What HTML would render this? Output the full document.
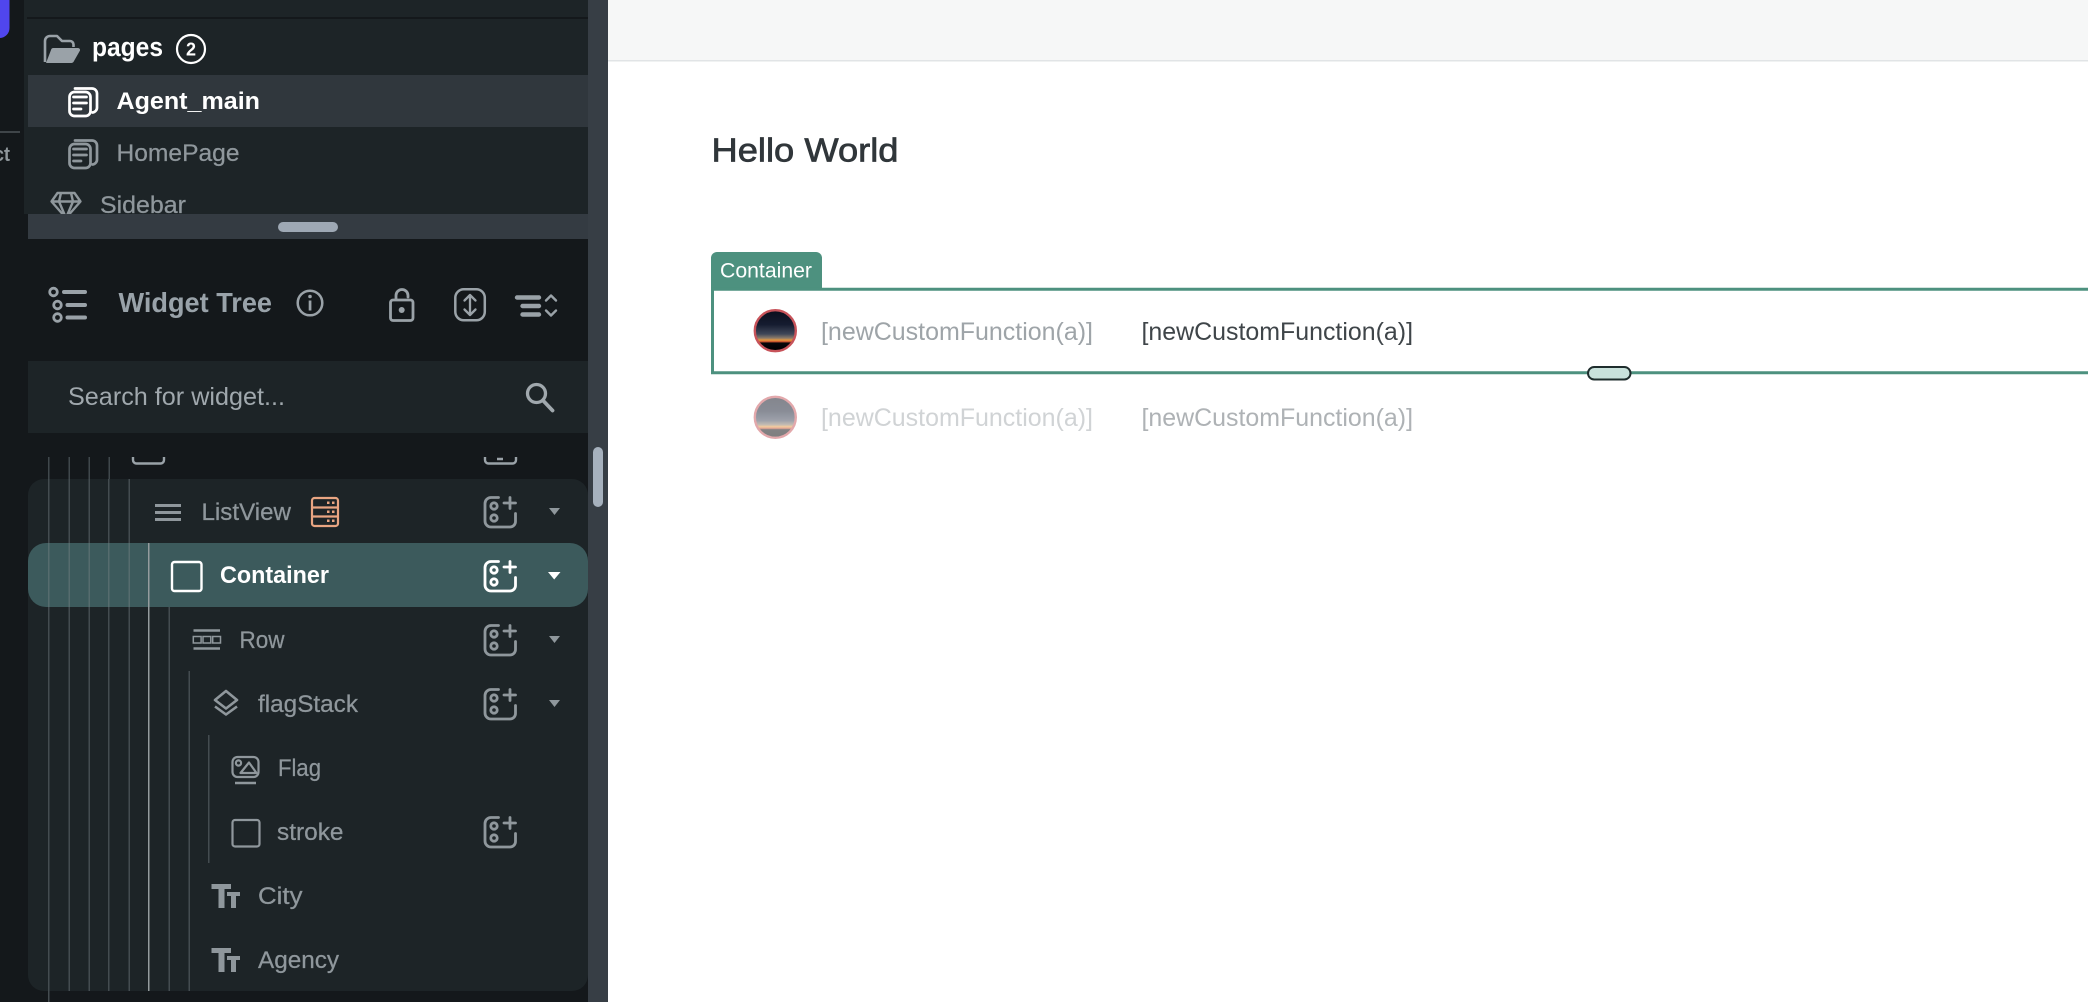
<!DOCTYPE html>
<html lang="en"><head><meta charset="utf-8"><title>Widget Tree</title>
<style>
html,body{margin:0;padding:0;background:#fff;width:2088px;height:1002px;overflow:hidden}
svg{display:block;filter:blur(.35px)}
text{font-family:"Liberation Sans",sans-serif;white-space:pre}
.d{fill:#8f979c;font-size:24.500px;stroke:#8f979c;stroke-width:.25px}
.b{fill:#fff;font-size:24.500px;font-weight:bold}
.f{font-size:25px}
</style></head><body>
<svg xmlns="http://www.w3.org/2000/svg" width="2088" height="1002" viewBox="0 0 2088 1002">
<defs>
<linearGradient id="sky" x1="0" y1="0" x2="0" y2="1">
<stop offset="0" stop-color="#0a0e1c"/><stop offset=".35" stop-color="#151c30"/><stop offset=".58" stop-color="#3f4658"/><stop offset=".68" stop-color="#8a7a6a"/><stop offset=".73" stop-color="#e8983e"/><stop offset=".77" stop-color="#c8502c"/><stop offset=".8" stop-color="#08060a"/><stop offset="1" stop-color="#000"/>
</linearGradient>
<g id="add" fill="none" stroke-width="2.800" stroke-linecap="round">
<path d="M14.500 1.500H7a6 6 0 0 0-6 6V25a6 6 0 0 0 6 6H26a5.500 5.500 0 0 0 5.500-5.500V17.500"/>
<circle cx="10" cy="10" r="3.200"/><circle cx="10" cy="22" r="3.200"/>
<path d="M26 1.500V12.500M20 7H31.500"/>
</g>
<g id="page" fill="none" stroke-width="2.700" stroke-linecap="round">
<rect x="69.500" y="92" width="21" height="24" rx="5"/>
<path d="M75 88.500H92A5 5 0 0 1 97 93.500V107A5 5 0 0 1 92.500 112.500"/>
<path d="M73.500 97H86.500M73.500 103H86.500M73.500 109H81"/>
</g>
</defs>

<!-- base -->
<rect width="2088" height="1002" fill="#fff"/>
<!-- left rail -->
<rect x="0" y="0" width="24" height="1002" fill="#14181b"/>
<path d="M0 0H9.500V28A10 10 0 0 1 0 38Z" fill="#5046ee"/>
<rect x="0" y="131" width="20" height="2" fill="#3f4549"/>
<text x="-6" y="161" font-size="20" font-weight="bold" fill="#8f979c" textLength="16" lengthAdjust="spacingAndGlyphs">ct</text>

<!-- panel -->
<rect x="24" y="0" width="564" height="1002" fill="#14181b"/>
<rect x="24" y="0" width="564" height="214" fill="#1d2427"/>
<rect x="27" y="17" width="561" height="2" fill="#14181b"/>
<rect x="28" y="75" width="560" height="52" fill="#30373d"/>

<!-- pages row -->
<path d="M45 62V41A5 5 0 0 1 50 36H57L62 41H70A3.500 3.500 0 0 1 73.500 44.500V47" fill="none" stroke="#9aa2a8" stroke-width="2.600" stroke-linejoin="round"/>
<path d="M51 50A2.500 2.500 0 0 1 53.500 48H78A2 2 0 0 1 80 50.500L74 61A3 3 0 0 1 71.500 63H46Z" fill="#9aa2a8"/>
<text class="b" x="92" y="56" style="font-size:26.500px" textLength="71" lengthAdjust="spacingAndGlyphs">pages</text>
<circle cx="191" cy="49" r="14" fill="none" stroke="#fff" stroke-width="2.200"/>
<text x="191" y="55.500" text-anchor="middle" font-size="18" font-weight="bold" fill="#fff">2</text>

<use href="#page" stroke="#fff"/>
<text class="b" x="116.500" y="109" textLength="143.500" lengthAdjust="spacingAndGlyphs">Agent_main</text>
<use href="#page" y="52" stroke="#8f979c"/>
<text class="d" x="116.500" y="161" textLength="123" lengthAdjust="spacingAndGlyphs">HomePage</text>
<g fill="none" stroke="#8f979c" stroke-width="2.400" stroke-linejoin="round">
<path d="M57.500 193H74.500L80.500 201.500L66 218L51.500 201.500ZM51.500 201.500H80.500M61 193L59 201.500L66 218L73 201.500L71 193"/>
</g>
<text class="d" x="100" y="213" textLength="86" lengthAdjust="spacingAndGlyphs">Sidebar</text>

<!-- divider -->
<rect x="28" y="214" width="560" height="25" fill="#343b42"/>
<rect x="278" y="222" width="60" height="10" rx="5" fill="#9ea8b4"/>

<!-- widget tree header -->
<g fill="none" stroke="#9aa2a8">
<g stroke-width="2.800"><circle cx="53.500" cy="292" r="3.800"/><circle cx="57.500" cy="305" r="3.800"/><circle cx="57.500" cy="317.500" r="3.800"/></g>
<path d="M64 292H85M67.500 305H85M67.500 317.500H85" stroke-width="4" stroke-linecap="round"/>
</g>
<text x="118.500" y="312" font-size="28" font-weight="bold" fill="#99a2a9" textLength="153.500" lengthAdjust="spacingAndGlyphs">Widget Tree</text>
<circle cx="310" cy="303" r="12.300" fill="none" stroke="#9aa2a8" stroke-width="2.500"/>
<circle cx="310" cy="296.500" r="1.800" fill="#9aa2a8"/><rect x="308.700" y="300.500" width="2.700" height="10" fill="#9aa2a8"/>
<g fill="none" stroke="#9aa2a8" stroke-width="2.800" stroke-linecap="round">
<rect x="390.500" y="300" width="22.500" height="20.500" rx="2.500"/>
<path d="M396 299V295.500A6 6 0 0 1 408 295.500V297"/>
<rect x="455.300" y="289.300" width="29.500" height="31" rx="8.500" stroke-width="2.500"/>
<path d="M470 295.500V314.500M464.500 300.500L470 295L475.500 300.500M464.500 309.500L470 315L475.500 309.500" stroke-width="2.300" stroke-linejoin="round"/>
<path d="M517 297.500H539M522.500 306H539M522.500 314.500H539" stroke-width="4.400"/>
<path d="M546 300.500L551 295.500L556 300.500M546 310.500L551 315.500L556 310.500" stroke-width="2.400" stroke-linejoin="round"/>
</g>
<circle cx="401.700" cy="310" r="3" fill="#9aa2a8"/>

<!-- search row -->
<rect x="28" y="361" width="560" height="72" fill="#1d2427"/>
<text x="68" y="405" font-size="25" fill="#a0a8ad" textLength="217" lengthAdjust="spacingAndGlyphs">Search for widget...</text>
<circle cx="536.500" cy="393.500" r="9" fill="none" stroke="#a0a8ad" stroke-width="3.300"/>
<path d="M543.500 401L552.500 410.500" stroke="#a0a8ad" stroke-width="3.800" stroke-linecap="round"/>

<!-- scrollbar -->
<rect x="588" y="0" width="20" height="1002" fill="#373e45"/>
<rect x="593" y="447" width="10" height="60" rx="5" fill="#a6b1bd"/>

<!-- partial row above -->
<path d="M133 457V460A3.500 3.500 0 0 0 136.500 463.500H160.500A3.500 3.500 0 0 0 164 460V457" fill="none" stroke="#9aa2a8" stroke-width="2.400"/>
<path d="M485 457V460A3.500 3.500 0 0 0 488.500 463.500H512.500A3.500 3.500 0 0 0 516 460V457M497 459H503" fill="none" stroke="#9aa2a8" stroke-width="2.400"/>
<rect x="48" y="457" width="1.500" height="545" fill="#40484c"/>
<rect x="68.500" y="457" width="1.500" height="22" fill="#40484c"/>
<rect x="88.500" y="457" width="1.500" height="22" fill="#40484c"/>
<rect x="108.500" y="457" width="1.500" height="22" fill="#40484c"/>

<!-- tree card -->
<path d="M44 479H572A16 16 0 0 1 588 495V975A16 16 0 0 1 572 991H44A16 16 0 0 1 28 975V495A16 16 0 0 1 44 479Z" fill="#1d2427"/>
<rect x="28" y="543" width="560" height="64" rx="18" fill="#3c5a5c"/>

<!-- tree lines -->
<g fill="#444c50">
<rect x="48" y="479" width="1.500" height="523"/>
<rect x="68.500" y="479" width="1.500" height="512"/>
<rect x="88.500" y="479" width="1.500" height="512"/>
<rect x="108" y="479" width="1.500" height="512"/>
<rect x="128.500" y="479" width="1.500" height="512"/>
<rect x="168.500" y="607" width="1.500" height="384"/>
<rect x="188.500" y="671" width="1.500" height="320"/>
<rect x="208" y="735" width="1.500" height="128"/>
</g>
<g fill="#566c6e">
<rect x="48" y="543" width="1.500" height="64"/>
<rect x="68.500" y="543" width="1.500" height="64"/>
<rect x="88.500" y="543" width="1.500" height="64"/>
<rect x="108" y="543" width="1.500" height="64"/>
<rect x="128.500" y="543" width="1.500" height="64"/>
</g>
<rect x="148" y="543" width="1.500" height="448" fill="#959c9e"/>

<!-- ListView -->
<path d="M155 505.500H181M155 512.500H181M155 519.500H181" stroke="#8f979c" stroke-width="3"/>
<text class="d" x="201.500" y="520" textLength="89.500" lengthAdjust="spacingAndGlyphs">ListView</text>
<g fill="none" stroke="#e9a582" stroke-width="2.200">
<rect x="312" y="498" width="26" height="28" rx="2.500"/><path d="M312 507.500H338M312 516.500H338"/>
</g>
<g fill="#e9a582"><rect x="327" y="501.500" width="2.500" height="2.500"/><rect x="332" y="501.500" width="2.500" height="2.500"/><rect x="327" y="510.500" width="2.500" height="2.500"/><rect x="332" y="510.500" width="2.500" height="2.500"/><rect x="327" y="519.500" width="2.500" height="2.500"/><rect x="332" y="519.500" width="2.500" height="2.500"/></g>
<use href="#add" x="484" y="496" stroke="#8f979c"/>
<path d="M549 508H560L554.500 515Z" fill="#8f979c"/>

<!-- Container -->
<rect x="172" y="562" width="29.500" height="29" rx="2.500" fill="none" stroke="#fff" stroke-width="2.400"/>
<text class="b" x="220" y="583" textLength="109" lengthAdjust="spacingAndGlyphs">Container</text>
<use href="#add" x="484" y="560" stroke="#fff"/>
<path d="M548 572H560.500L554.200 579.500Z" fill="#fff"/>

<!-- Row -->
<path d="M193.500 630.500H220M193.500 648.500H220" stroke="#8f979c" stroke-width="2.600"/>
<g fill="none" stroke="#8f979c" stroke-width="1.500"><rect x="193.300" y="636.500" width="7.800" height="6.500"/><rect x="203" y="636.500" width="7.800" height="6.500"/><rect x="212.700" y="636.500" width="7.800" height="6.500"/></g>
<text class="d" x="239.500" y="648" textLength="45" lengthAdjust="spacingAndGlyphs">Row</text>
<use href="#add" x="484" y="624" stroke="#8f979c"/>
<path d="M549 636H560L554.500 643Z" fill="#8f979c"/>

<!-- flagStack -->
<g fill="none" stroke="#8f979c" stroke-width="2.600" stroke-linejoin="round">
<path d="M226 691L237 700L226 708.500L215 700Z"/><path d="M215 706.500L226 714.500L237 706.500"/>
</g>
<text class="d" x="258" y="712" textLength="100" lengthAdjust="spacingAndGlyphs">flagStack</text>
<use href="#add" x="484" y="688" stroke="#8f979c"/>
<path d="M549 700H560L554.500 707Z" fill="#8f979c"/>

<!-- Flag -->
<g fill="none" stroke="#8f979c" stroke-width="2.200" stroke-linejoin="round">
<rect x="232.500" y="757" width="26" height="20" rx="5"/>
<circle cx="238.500" cy="763" r="2.600"/>
<path d="M240.500 773L249 762.500L256.500 773Z"/>
</g>
<path d="M235 783H256" stroke="#8f979c" stroke-width="2.400"/>
<text class="d" x="278" y="776" textLength="43" lengthAdjust="spacingAndGlyphs">Flag</text>

<!-- stroke -->
<rect x="232.500" y="820" width="27" height="26.500" rx="2.500" fill="none" stroke="#8f979c" stroke-width="2.200"/>
<text class="d" x="277" y="840" textLength="66.500" lengthAdjust="spacingAndGlyphs">stroke</text>
<use href="#add" x="484" y="816" stroke="#8f979c"/>

<!-- City -->
<g fill="#8f979c">
<rect x="211.500" y="884" width="19.500" height="5"/><rect x="218.500" y="884" width="6" height="24"/>
<rect x="227" y="892" width="13" height="4"/><rect x="231" y="892" width="5" height="16"/>
</g>
<text class="d" x="258" y="904" textLength="44.500" lengthAdjust="spacingAndGlyphs">City</text>

<!-- Agency -->
<g fill="#8f979c">
<rect x="211.500" y="948" width="19.500" height="5"/><rect x="218.500" y="948" width="6" height="24"/>
<rect x="227" y="956" width="13" height="4"/><rect x="231" y="956" width="5" height="16"/>
</g>
<text class="d" x="258" y="968" textLength="81" lengthAdjust="spacingAndGlyphs">Agency</text>

<!-- right canvas -->
<rect x="608" y="0" width="1480" height="60" fill="#f6f7f7"/>
<rect x="608" y="60" width="1480" height="1.500" fill="#e1e4e6"/>

<text x="711.500" y="161.500" font-size="33" fill="#30363a" stroke="#30363a" stroke-width=".7" textLength="187" lengthAdjust="spacingAndGlyphs">Hello World</text>

<!-- selected container overlay -->
<path d="M711 289V258A6 6 0 0 1 717 252H816A6 6 0 0 1 822 258V289Z" fill="#4d917f"/>
<text x="720" y="277.500" font-size="21.500" fill="#fff" textLength="92" lengthAdjust="spacingAndGlyphs">Container</text>
<path d="M2088 289.200H712.500V372.800H2088" fill="none" stroke="#4d917f" stroke-width="3"/>
<rect x="1588" y="367" width="42.500" height="12.500" rx="6.250" fill="#c9e2dc" stroke="#1f2d2d" stroke-width="2"/>

<!-- row 1 -->
<circle cx="775.300" cy="330.700" r="20.500" fill="url(#sky)" stroke="#c7535a" stroke-width="2.400"/>
<text class="f" x="821" y="340" fill="#9ea4a8" textLength="272" lengthAdjust="spacingAndGlyphs">[newCustomFunction(a)]</text>
<text class="f" x="1141.500" y="340" fill="#3f4549" textLength="271.500" lengthAdjust="spacingAndGlyphs">[newCustomFunction(a)]</text>

<!-- row 2 -->
<circle cx="775.300" cy="417.300" r="20.500" fill="url(#sky)" stroke="#c7535a" stroke-width="2.400" opacity=".5"/>
<text class="f" x="821" y="426" fill="#d0d3d5" textLength="272" lengthAdjust="spacingAndGlyphs">[newCustomFunction(a)]</text>
<text class="f" x="1141.500" y="426" fill="#aeb2b5" textLength="271.500" lengthAdjust="spacingAndGlyphs">[newCustomFunction(a)]</text>
</svg>
</body></html>
